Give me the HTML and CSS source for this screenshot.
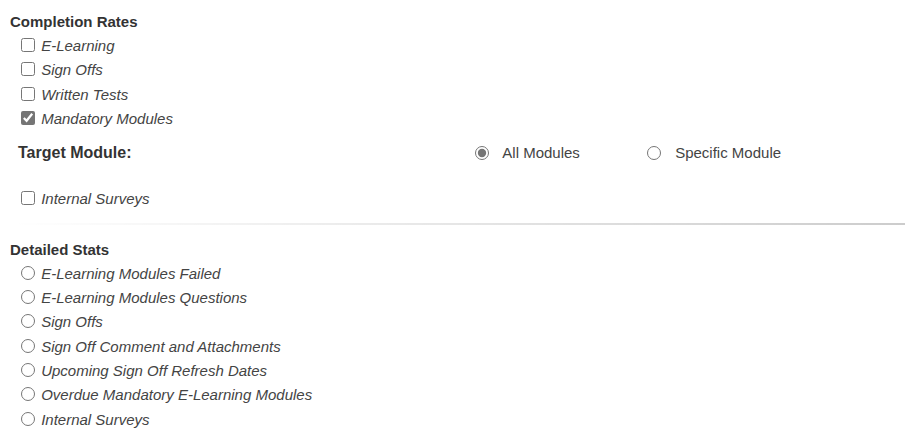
FILE: index.html
```html
<html>
  <head>
    <link rel="stylesheet" href="styles.css">
    <title>Report Options</title>
  </head>
  <body>
    <div class="section">
      <div class="title">Completion Rates</div>
      <div class="options">
        <label class="opt"><input type="checkbox"> E-Learning</label>
        <label class="opt"><input type="checkbox"> Sign Offs</label>
        <label class="opt"><input type="checkbox"> Written Tests</label>
        <label class="opt"><input type="checkbox" checked> Mandatory Modules</label>

        <div class="target">
          <div class="target-label">Target Module:</div>
          <div class="target-choices">
            <label class="choice"><input type="radio" name="target" checked> All Modules</label>
            <label class="choice"><input type="radio" name="target"> Specific Module</label>
          </div>
        </div>

        <label class="opt"><input type="checkbox"> Internal Surveys</label>
      </div>
    </div>

    <hr class="fade">

    <div class="section">
      <div class="title">Detailed Stats</div>
      <div class="options">
        <label class="opt"><input type="radio" name="stats"> E-Learning Modules Failed</label>
        <label class="opt"><input type="radio" name="stats"> E-Learning Modules Questions</label>
        <label class="opt"><input type="radio" name="stats"> Sign Offs</label>
        <label class="opt"><input type="radio" name="stats"> Sign Off Comment and Attachments</label>
        <label class="opt"><input type="radio" name="stats"> Upcoming Sign Off Refresh Dates</label>
        <label class="opt"><input type="radio" name="stats"> Overdue Mandatory E-Learning Modules</label>
        <label class="opt"><input type="radio" name="stats"> Internal Surveys</label>
      </div>
    </div>
  </body>
</html>
```

FILE: styles.css
```css
body {margin:0; padding:12px 0 0 10px; font-family:"Liberation Sans", Arial, sans-serif; font-size:15px; color:#333; background:#fff;}
input {accent-color:#757575; width:14px; height:14px; margin:0 2px 0 3px; vertical-align:-1px;}
.title {font-weight:bold; line-height:20px; margin-bottom:4px;}
.options {padding-left:8px;}
.opt {display:block; font-style:italic; line-height:20px; margin-bottom:4.3px; color:#444;}
.target {display:flex; align-items:center; height:22px; margin:13px 0 25px 0;}
.target-label {width:457px; font-size:16px; font-weight:bold; color:#333;}
.target-choices {display:flex;}
.choice {width:172px; color:#444;}
.choice input {margin:0 10px 0 0; vertical-align:-2px;}
.fade {border:0; height:2px; margin:14px 0 15px 0; background:linear-gradient(to right, rgba(0,0,0,0), rgba(0,0,0,0.2));}
```
